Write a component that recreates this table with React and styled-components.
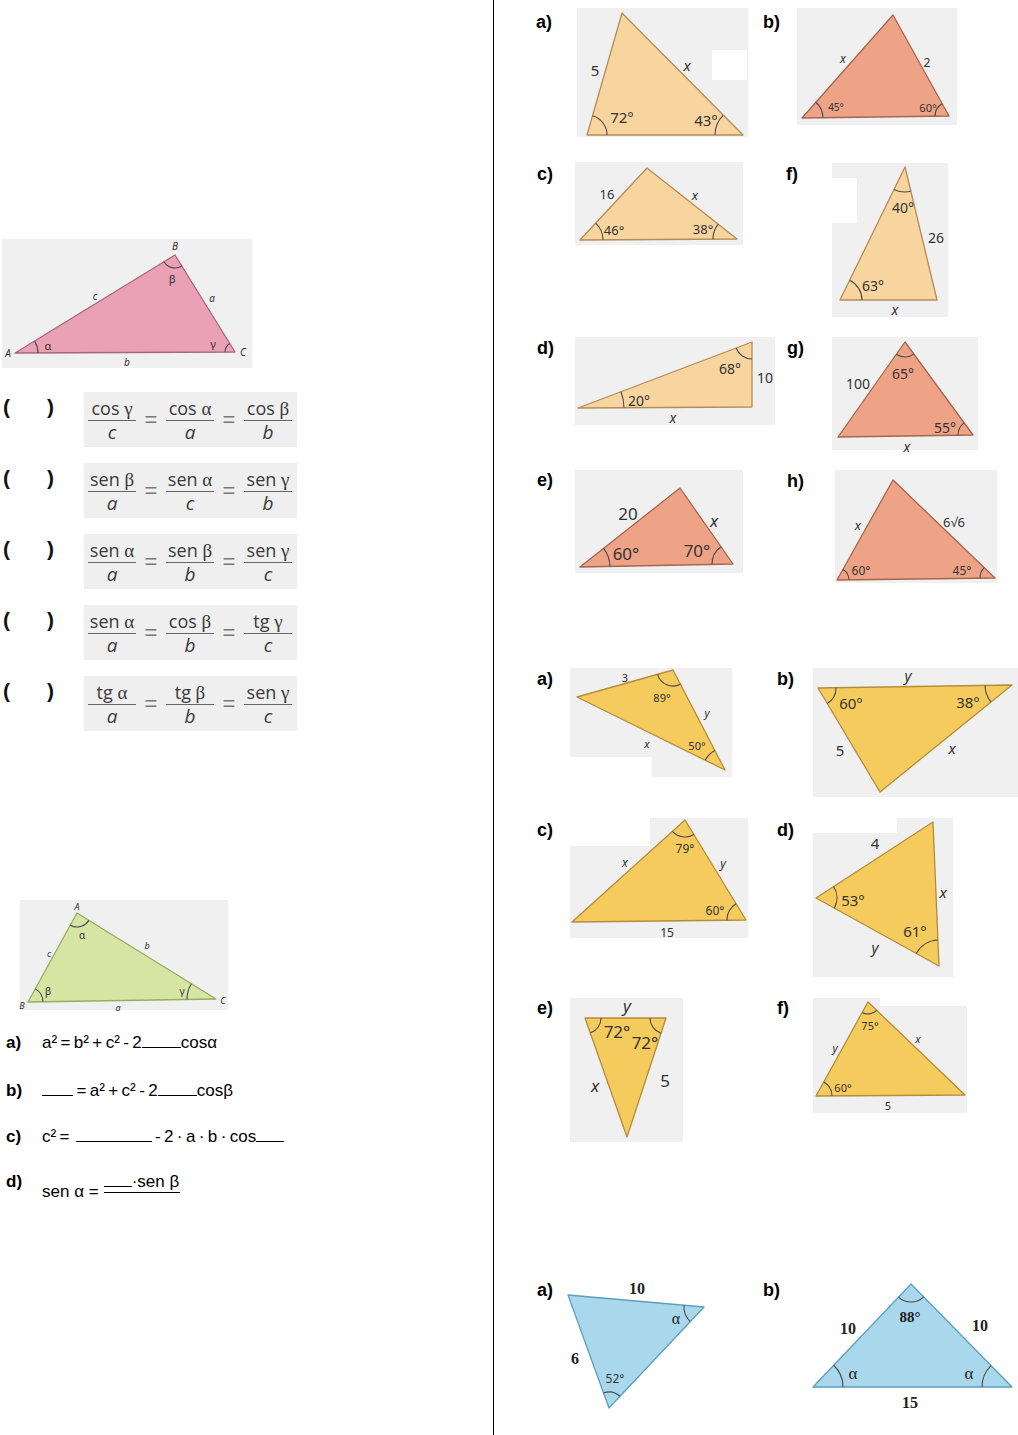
import React from "react";
import styled, { createGlobalStyle } from "styled-components";

const GlobalStyle = createGlobalStyle`
  html, body { margin: 0; padding: 0; background: #fff; }
  body { font-family: "Liberation Sans", Arial, sans-serif; color: #000; }
`;

const Page = styled.div`
  display: flex;
  width: 1018px;
  min-height: 1435px;
`;

const LeftCol = styled.div`
  width: 493px;
  flex-shrink: 0;
  border-right: 1px solid #000;
  display: flex;
  flex-direction: column;
  align-items: flex-start;
`;

const RightCol = styled.div`
  width: 524px;
  flex-shrink: 0;
  display: flex;
  flex-direction: column;
`;

const FigSvg = styled.svg`
  display: block;
  flex-shrink: 0;
  overflow: visible;
  margin-left: ${(p) => p.$ml || 0}px;
  margin-top: ${(p) => p.$mt || 0}px;
`;

/* ---------- right column problem rows ---------- */
const Row = styled.div`
  display: flex;
  align-items: flex-start;
  margin-top: ${(p) => p.$mt}px;
`;

const ProbLabel = styled.div`
  width: 20px;
  flex-shrink: 0;
  font-family: "Liberation Sans", Arial, sans-serif;
  font-weight: bold;
  font-size: 18px;
  line-height: 20px;
  white-space: nowrap;
  margin-left: ${(p) => p.$ml}px;
  margin-top: ${(p) => p.$mt || 0}px;
`;

/* ---------- left column formulas ---------- */
const FormulaRow = styled.div`
  display: flex;
  align-items: flex-start;
  height: 52px;
  margin-top: ${(p) => p.$mt}px;
`;

const Parens = styled.div`
  width: 81px;
  padding-left: 3px;
  margin-top: 4px;
  display: flex;
  gap: 37px;
  font-family: "Liberation Sans", Arial, sans-serif;
  font-weight: bold;
  font-size: 21px;
  line-height: 22px;
  color: #111;
`;

const FormulaBox = styled.div`
  width: 209px;
  height: 50px;
  padding: 5px 0 0 4px;
  box-sizing: content-box;
  background: #efefef;
  display: flex;
  align-items: flex-start;
  font-family: "Open Sans", "Noto Sans", sans-serif;
  color: #3a3a3a;
`;

const Fraction = styled.div`
  width: 48px;
  display: flex;
  flex-direction: column;
  align-items: center;
`;

const Num = styled.div`
  align-self: stretch;
  text-align: center;
  font-size: 18px;
  line-height: 22px;
  border-bottom: 1.3px solid #666;
  white-space: nowrap;
`;

const Den = styled.div`
  font-size: 19px;
  line-height: 22px;
  font-style: italic;
`;

const Greek = styled.span`
  font-family: "Liberation Serif", "DejaVu Serif", serif;
  font-size: 19px;
`;

const Eq = styled.div`
  width: 30px;
  text-align: center;
  font-family: "Liberation Sans", Arial, sans-serif;
  font-size: 22px;
  line-height: 22px;
  margin-top: 12px;
  color: #777;
`;

/* ---------- left column equations ---------- */
const EqRow = styled.div`
  display: flex;
  align-items: flex-start;
  padding-left: 6px;
  margin-top: ${(p) => p.$mt}px;
  font-family: "Liberation Sans", Arial, sans-serif;
  font-size: 17px;
  line-height: 20px;
`;

const EqLabel = styled.div`
  width: 36px;
  flex-shrink: 0;
  font-weight: bold;
`;

const EqText = styled.div`
  white-space: pre;
  margin-top: ${(p) => p.$mt || 0}px;
`;

const Blank = styled.span`
  display: inline-block;
  width: ${(p) => p.$w}px;
  height: 12px;
  border-bottom: 1px solid #000;
  margin-left: ${(p) => p.$ml || 0}px;
`;

const DFrac = styled.div`
  white-space: pre;
  margin-left: 5px;
  padding-right: 1px;
  border-bottom: 1px solid #000;
`;

/* ---------- triangle drawing ---------- */
function unit(a, b) {
  const dx = b[0] - a[0];
  const dy = b[1] - a[1];
  const l = Math.hypot(dx, dy);
  return [dx / l, dy / l];
}

function arcPath(V, P1, P2, r) {
  const u = unit(V, P1);
  const v = unit(V, P2);
  const a = [V[0] + u[0] * r, V[1] + u[1] * r];
  const b = [V[0] + v[0] * r, V[1] + v[1] * r];
  const cross = u[0] * v[1] - u[1] * v[0];
  const sweep = cross > 0 ? 1 : 0;
  return `M${a[0]} ${a[1]} A${r} ${r} 0 0 ${sweep} ${b[0]} ${b[1]}`;
}

const BG = "#f0f0f0";
const ORANGE = { fill: "#f8d59f", stroke: "#b48c58" };
const SALMON = { fill: "#eea386", stroke: "#a5664e" };
const GOLD = { fill: "#f6cb5d", stroke: "#b38d3a" };
const BLUE = { fill: "#a9d8ed", stroke: "#5b9fbf" };
const PINK = { fill: "#eaa1b5", stroke: "#a6677b" };
const GREEN = { fill: "#d6e4a4", stroke: "#98ad5e" };

function Figure({ box, bg, patches = [], pts, color, arcs = [], labels = [], ml, mt, sw = 1.3 }) {
  const [x, y, w, h] = box;
  return (
    <FigSvg $ml={ml} $mt={mt} width={w} height={h} viewBox={`${x} ${y} ${w} ${h}`}>
      {bg && <rect x={x} y={y} width={w} height={h} fill={bg} />}
      {patches.map((p, i) => (
        <rect key={i} x={p[0]} y={p[1]} width={p[2]} height={p[3]} fill="#fff" />
      ))}
      <polygon
        points={pts.map((p) => p.join(",")).join(" ")}
        fill={color.fill}
        stroke={color.stroke}
        strokeWidth={sw}
        strokeLinejoin="round"
      />
      {arcs.map(([i, r], k) => (
        <path
          key={k}
          d={arcPath(pts[i], pts[(i + 1) % 3], pts[(i + 2) % 3], r)}
          fill="none"
          stroke="#4a4a4a"
          strokeWidth={1.1}
        />
      ))}
      {labels.map(([t, lx, ly, size, flags = ""], k) => (
        <text
          key={k}
          x={lx}
          y={ly}
          textAnchor="middle"
          dominantBaseline="central"
          fontSize={size}
          fontStyle={flags.includes("i") ? "italic" : "normal"}
          fontWeight={flags.includes("b") ? "bold" : "normal"}
          fontFamily={flags.includes("s") ? '"Liberation Serif", serif' : '"Noto Sans", "Open Sans", sans-serif'}
          fill={flags.includes("s") ? "#222" : "#333"}
        >
          {t}
        </text>
      ))}
    </FigSvg>
  );
}

/* ---------- data ---------- */
const formulas = [
  [["cos", "γ", "c"], ["cos", "α", "a"], ["cos", "β", "b"]],
  [["sen", "β", "a"], ["sen", "α", "c"], ["sen", "γ", "b"]],
  [["sen", "α", "a"], ["sen", "β", "b"], ["sen", "γ", "c"]],
  [["sen", "α", "a"], ["cos", "β", "b"], ["tg", "γ", "c"]],
  [["tg", "α", "a"], ["tg", "β", "b"], ["sen", "γ", "c"]],
];

const T = "\u2009";

function FormulaLine({ parts, mt }) {
  return (
    <FormulaRow $mt={mt}>
      <Parens>
        <span>(</span>
        <span>)</span>
      </Parens>
      <FormulaBox>
        {parts.map(([fn, g, d], i) => (
          <React.Fragment key={i}>
            {i > 0 && <Eq>=</Eq>}
            <Fraction>
              <Num>
                {fn} <Greek>{g}</Greek>
              </Num>
              <Den>{d}</Den>
            </Fraction>
          </React.Fragment>
        ))}
      </FormulaBox>
    </FormulaRow>
  );
}

export default function App() {
  return (
    <>
      <GlobalStyle />
      <Page>
        <LeftCol>
          <Figure
            ml={2}
            mt={239}
            box={[2, 239, 250, 129]}
            bg={BG}
            color={PINK}
            pts={[[15, 353], [175, 255], [235, 352]]}
            arcs={[[0, 23], [1, 13], [2, 10]]}
            labels={[
              ["A", 8, 353, 10, "i"],
              ["B", 175, 246, 10, "i"],
              ["C", 243, 352, 10, "i"],
              ["c", 95, 296, 10, "i"],
              ["a", 212, 298, 10, "i"],
              ["b", 127, 362, 10, "i"],
              ["α", 48, 345, 11],
              ["β", 172, 278, 11],
              ["γ", 213, 343, 11],
            ]}
          />
          {formulas.map((f, i) => (
            <FormulaLine key={i} parts={f} mt={i === 0 ? 24 : 19} />
          ))}
          <Figure
            ml={20}
            mt={172}
            box={[20, 900, 208, 110]}
            bg={BG}
            color={GREEN}
            pts={[[28, 1002], [77, 913], [216, 999]]}
            arcs={[[0, 15], [1, 14], [2, 29]]}
            labels={[
              ["A", 77, 906, 9, "i"],
              ["B", 22, 1005, 9, "i"],
              ["C", 223, 1000, 9, "i"],
              ["c", 49, 953, 9, "i"],
              ["b", 147, 945, 9, "i"],
              ["a", 118, 1007, 9, "i"],
              ["α", 82, 935, 10],
              ["β", 48, 991, 10],
              ["γ", 182, 991, 10],
            ]}
          />
          <EqRow $mt={23}>
            <EqLabel>a)</EqLabel>
            <EqText>
              {`a²${T}=${T}b²${T}+${T}c²${T}-${T}2`}
              <Blank $w={39} />
              cosα
            </EqText>
          </EqRow>
          <EqRow $mt={28}>
            <EqLabel>b)</EqLabel>
            <EqText>
              <Blank $w={31} />
              {`${T}=${T}a²${T}+${T}c²${T}-${T}2`}
              <Blank $w={39} />
              cosβ
            </EqText>
          </EqRow>
          <EqRow $mt={26}>
            <EqLabel>c)</EqLabel>
            <EqText>
              {`c²${T}=`}
              <Blank $w={76} $ml={6} />
              {`${T}-${T}2${T}·${T}a${T}·${T}b${T}·${T}cos`}
              <Blank $w={28} />
            </EqText>
          </EqRow>
          <EqRow $mt={25}>
            <EqLabel>d)</EqLabel>
            <EqText $mt={10}>sen α =</EqText>
            <DFrac>
              <Blank $w={28} />
              ·sen β
            </DFrac>
          </EqRow>
        </LeftCol>

        <RightCol>
          {/* Group 1 */}
          <Row $mt={8}>
            <ProbLabel $ml={42} $mt={4}>a)</ProbLabel>
            <Figure
              ml={21}
              box={[577, 8, 171, 129]}
              bg={BG}
              patches={[[712, 50, 35, 30]]}
              color={ORANGE}
              pts={[[622, 13], [587, 135], [743, 135]]}
              arcs={[[1, 20], [2, 28]]}
              labels={[
                ["5", 595, 70, 15],
                ["x", 687, 65, 15, "i"],
                ["72°", 622, 117, 15],
                ["43°", 706, 120, 15],
              ]}
            />
            <ProbLabel $ml={15} $mt={4}>b)</ProbLabel>
            <Figure
              ml={14}
              box={[797, 8, 160, 117]}
              bg={BG}
              color={SALMON}
              pts={[[893, 15], [802, 118], [949, 116]]}
              arcs={[[1, 21], [2, 14]]}
              labels={[
                ["x", 843, 58, 12, "i"],
                ["2", 927, 62, 12],
                ["45°", 836, 107, 10],
                ["60°", 928, 107, 11],
              ]}
            />
          </Row>

          <Row $mt={25}>
            <ProbLabel $ml={43} $mt={2}>c)</ProbLabel>
            <Figure
              ml={18}
              box={[575, 162, 168, 83]}
              bg={BG}
              color={ORANGE}
              pts={[[647, 168], [580, 240], [737, 239]]}
              arcs={[[1, 23], [2, 24]]}
              labels={[
                ["16", 607, 194, 13],
                ["x", 695, 195, 13, "i"],
                ["46°", 614, 230, 13],
                ["38°", 703, 229, 13],
              ]}
            />
            <ProbLabel $ml={43} $mt={2}>f)</ProbLabel>
            <Figure
              ml={26}
              mt={1}
              box={[832, 163, 116, 154]}
              bg={BG}
              patches={[[832, 178, 25, 45]]}
              color={ORANGE}
              pts={[[905, 167], [840, 300], [937, 300]]}
              arcs={[[0, 25], [1, 22]]}
              labels={[
                ["40°", 903, 207, 14],
                ["26", 936, 237, 14],
                ["63°", 873, 285, 14],
                ["x", 895, 309, 14, "i"],
              ]}
            />
          </Row>

          <Row $mt={20}>
            <ProbLabel $ml={43} $mt={1}>d)</ProbLabel>
            <Figure
              ml={18}
              box={[575, 337, 200, 88]}
              bg={BG}
              color={ORANGE}
              pts={[[578, 408], [752, 342], [752, 407]]}
              arcs={[[0, 46], [1, 17]]}
              labels={[
                ["68°", 730, 368, 14],
                ["10", 765, 377, 14],
                ["20°", 639, 400, 14],
                ["x", 673, 417, 14, "i"],
              ]}
            />
            <ProbLabel $ml={12} $mt={1}>g)</ProbLabel>
            <Figure
              ml={25}
              box={[832, 337, 146, 113]}
              bg={BG}
              color={SALMON}
              pts={[[905, 342], [838, 437], [973, 435]]}
              arcs={[[0, 15], [2, 15]]}
              labels={[
                ["100", 858, 383, 14],
                ["65°", 903, 373, 14],
                ["55°", 945, 427, 14],
                ["x", 907, 446, 14, "i"],
              ]}
            />
          </Row>

          <Row $mt={20}>
            <ProbLabel $ml={43} $mt={0}>e)</ProbLabel>
            <Figure
              ml={18}
              box={[575, 470, 168, 103]}
              bg={BG}
              color={SALMON}
              pts={[[680, 488], [580, 567], [733, 564]]}
              arcs={[[1, 30], [2, 21]]}
              labels={[
                ["20", 628, 513, 17],
                ["x", 714, 520, 17, "i"],
                ["60°", 626, 553, 17],
                ["70°", 697, 550, 17],
              ]}
            />
            <ProbLabel $ml={44} $mt={1}>h)</ProbLabel>
            <Figure
              ml={28}
              box={[835, 470, 162, 113]}
              bg={BG}
              color={SALMON}
              pts={[[893, 480], [837, 580], [995, 578]]}
              arcs={[[1, 12], [2, 15]]}
              labels={[
                ["x", 858, 525, 13, "i"],
                ["6√6", 954, 522, 13],
                ["60°", 861, 570, 12],
                ["45°", 962, 570, 12],
              ]}
            />
          </Row>

          {/* Group 2 */}
          <Row $mt={85}>
            <ProbLabel $ml={43} $mt={1}>a)</ProbLabel>
            <Figure
              ml={13}
              box={[570, 668, 162, 109]}
              bg={BG}
              patches={[[570, 757, 82, 20]]}
              color={GOLD}
              pts={[[577, 697], [673, 670], [725, 770]]}
              arcs={[[1, 16], [2, 22]]}
              labels={[
                ["3", 625, 677, 11],
                ["89°", 662, 697, 11],
                ["y", 707, 712, 11, "i"],
                ["x", 647, 743, 11, "i"],
                ["50°", 697, 745, 11],
              ]}
            />
            <ProbLabel $ml={45} $mt={1}>b)</ProbLabel>
            <Figure
              ml={16}
              box={[813, 668, 205, 129]}
              bg={BG}
              color={GOLD}
              pts={[[818, 688], [1012, 685], [880, 792]]}
              arcs={[[0, 18], [1, 27]]}
              labels={[
                ["y", 908, 675, 15, "i"],
                ["60°", 851, 703, 15],
                ["38°", 968, 702, 15],
                ["5", 840, 750, 15],
                ["x", 952, 748, 15, "i"],
              ]}
            />
          </Row>

          <Row $mt={21}>
            <ProbLabel $ml={43} $mt={2}>c)</ProbLabel>
            <Figure
              ml={13}
              box={[570, 818, 178, 120]}
              bg={BG}
              patches={[[570, 818, 80, 28]]}
              color={GOLD}
              pts={[[572, 922], [685, 820], [746, 920]]}
              arcs={[[1, 17], [2, 19]]}
              labels={[
                ["x", 625, 862, 12, "i"],
                ["79°", 685, 848, 12],
                ["y", 723, 863, 12, "i"],
                ["60°", 715, 910, 12],
                ["15", 667, 932, 12],
              ]}
            />
            <ProbLabel $ml={29} $mt={2}>d)</ProbLabel>
            <Figure
              ml={16}
              box={[813, 818, 140, 159]}
              bg={BG}
              patches={[[813, 818, 84, 15]]}
              color={GOLD}
              pts={[[816, 898], [933, 822], [939, 966]]}
              arcs={[[0, 21], [2, 26]]}
              labels={[
                ["4", 875, 843, 15],
                ["53°", 853, 900, 15],
                ["x", 943, 892, 15, "i"],
                ["61°", 915, 931, 15],
                ["y", 875, 947, 15, "i"],
              ]}
            />
          </Row>

          <Row $mt={21}>
            <ProbLabel $ml={43} $mt={0}>e)</ProbLabel>
            <Figure
              ml={13}
              box={[570, 998, 113, 144]}
              bg={BG}
              color={GOLD}
              pts={[[585, 1018], [666, 1018], [627, 1137]]}
              arcs={[[0, 16], [1, 16]]}
              labels={[
                ["y", 627, 1005, 17, "i"],
                ["72°", 617, 1031, 17],
                ["72°", 645, 1042, 17],
                ["x", 595, 1085, 17, "i"],
                ["5", 665, 1080, 17],
              ]}
            />
            <ProbLabel $ml={94} $mt={0}>f)</ProbLabel>
            <Figure
              ml={16}
              box={[813, 998, 154, 115]}
              bg={BG}
              patches={[[880, 998, 87, 8]]}
              color={GOLD}
              pts={[[868, 1002], [816, 1096], [965, 1095]]}
              arcs={[[0, 12], [1, 16]]}
              labels={[
                ["75°", 870, 1025, 11],
                ["y", 835, 1047, 11, "i"],
                ["x", 918, 1038, 11, "i"],
                ["60°", 843, 1087, 11],
                ["5", 888, 1105, 11],
              ]}
            />
          </Row>

          {/* Group 3 */}
          <Row $mt={136}>
            <ProbLabel $ml={43} $mt={2}>a)</ProbLabel>
            <Figure
              ml={5}
              mt={2}
              box={[562, 1280, 146, 132]}
              color={BLUE}
              pts={[[568, 1295], [704, 1307], [609, 1408]]}
              arcs={[[1, 20], [2, 16]]}
              labels={[
                ["10", 637, 1288, 16, "bs"],
                ["α", 676, 1318, 16, "s"],
                ["6", 575, 1358, 16, "bs"],
                ["52°", 615, 1378, 12],
              ]}
            />
            <ProbLabel $ml={55} $mt={2}>b)</ProbLabel>
            <Figure
              ml={23}
              box={[806, 1278, 210, 130]}
              color={BLUE}
              pts={[[911, 1284], [813, 1387], [1012, 1387]]}
              arcs={[[0, 18], [1, 30], [2, 30]]}
              labels={[
                ["88°", 910, 1317, 15, "bs"],
                ["10", 848, 1328, 16, "bs"],
                ["10", 980, 1325, 16, "bs"],
                ["α", 853, 1373, 17, "s"],
                ["α", 969, 1373, 17, "s"],
                ["15", 910, 1402, 16, "bs"],
              ]}
            />
          </Row>
        </RightCol>
      </Page>
    </>
  );
}
